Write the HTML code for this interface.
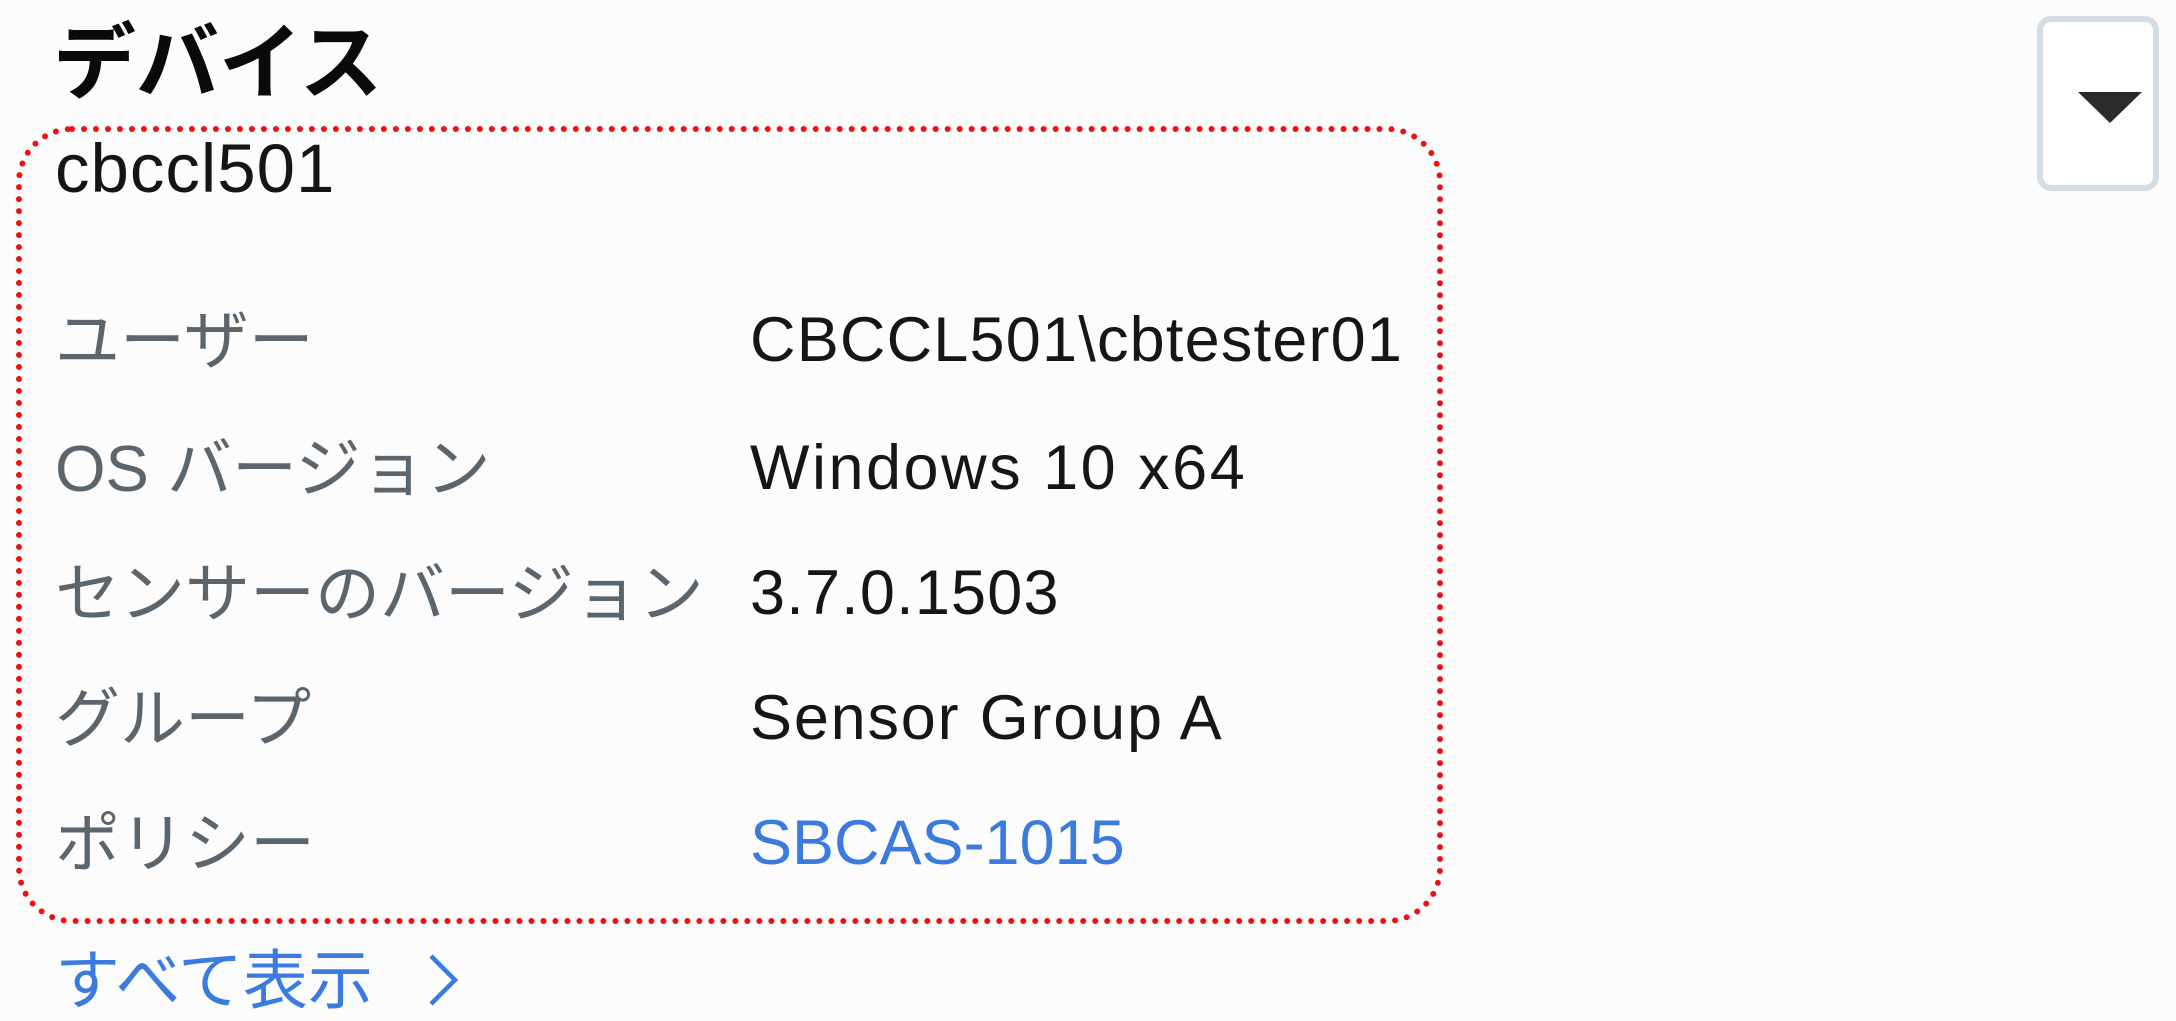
<!DOCTYPE html>
<html><head><meta charset="utf-8"><style>
body{margin:0;width:2176px;height:1021px;background:#fcfcfd;overflow:hidden;position:relative;font-family:"Liberation Sans","Noto Sans CJK JP",sans-serif;}
.t{position:absolute;white-space:nowrap;line-height:1;}
.title{left:53px;top:22px;font-size:83px;font-weight:bold;color:#0a0a0a;}
.box{position:absolute;left:16px;top:126px;width:1415px;height:786px;border:6px dotted #f01010;border-radius:56px;}
.lab{left:55px;font-size:65px;color:#5b656d;}
.val{left:750px;font-size:63px;color:#161616;letter-spacing:1.2px;}
.btn{position:absolute;left:2037px;top:16px;width:122px;height:175px;border:6px solid #d5dde4;border-radius:14px;box-sizing:border-box;background:#fdfdfe;}
.tri{position:absolute;left:35px;top:70px;width:0;height:0;border-left:32px solid transparent;border-right:32px solid transparent;border-top:31px solid #2a2a2a;}
</style></head><body>
<div class="t title">デバイス</div>
<div class="box"></div>
<div class="t" style="left:55px;top:134px;font-size:69px;color:#151515;letter-spacing:1px;">cbccl501</div>
<div class="t lab" style="top:308px">ユーザー</div><div class="t val" style="top:309px">CBCCL501\cbtester01</div>
<div class="t lab" style="top:436px">OS バージョン</div><div class="t val" style="top:437px;letter-spacing:2.5px">Windows 10 x64</div>
<div class="t lab" style="top:561px">センサーのバージョン</div><div class="t val" style="top:562px">3.7.0.1503</div>
<div class="t lab" style="top:686px">グループ</div><div class="t val" style="top:687px;letter-spacing:1.8px">Sensor Group A</div>
<div class="t lab" style="top:811px">ポリシー</div><div class="t val" style="top:812px;color:#3b7be0;letter-spacing:0">SBCAS-1015</div>
<div class="t" style="left:55px;top:948px;font-size:65px;color:#3b7be0">すべて表示</div>
<svg style="position:absolute;left:425px;top:952px" width="36" height="56" viewBox="0 0 36 56"><path d="M6 4 L30 28 L6 52" fill="none" stroke="#3b7be0" stroke-width="4.5"/></svg>
<div class="btn"><div class="tri"></div></div>
</body></html>
